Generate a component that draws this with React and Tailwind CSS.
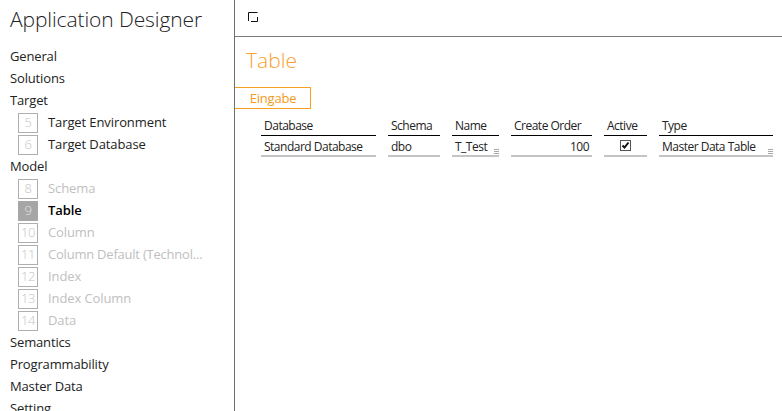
const F = { fontFamily: '"Open Sans","Noto Sans",sans-serif' };

function Top({ children }) {
  return <div className="h-[22px] leading-[20px] pl-[10px] text-[13px] text-[#222] tracking-[-0.15px]">{children}</div>;
}

function Step({ n, label, state, tight }) {
  const box =
    state === "active"
      ? "bg-[#a6a6a6] border-[#a6a6a6] text-[#e4e4e4]"
      : "border-[#aeaeae] text-[#c4c4c4]";
  const text =
    state === "active"
      ? "text-black font-semibold"
      : state === "on"
      ? "text-[#222]"
      : "text-[#c0c0c0]";
  return (
    <div className="h-[22px] flex items-center pl-[18px]">
      <div className={`w-5 h-5 border flex items-center justify-center text-[13px] font-light tracking-[-0.5px] ${box}`}>{n}</div>
      <div className={`ml-[10px] text-[13px] whitespace-nowrap ${tight ? "tracking-[-0.22px]" : "tracking-[-0.1px]"} ${text}`}>{label}</div>
    </div>
  );
}

function Col({ w, head, children, cls = "", grip }) {
  return (
    <div className={`${w} flex flex-col`}>
      <div className="h-[22px] border-b-[1.5px] border-black text-[12px] leading-[24px] pl-[3px] text-[#222] tracking-[-0.5px] whitespace-nowrap">{head}</div>
      <div className={`relative h-[21px] border-b-2 border-[#c4c4c4] text-[12px] leading-[21px] px-[3px] text-[#222] tracking-[-0.5px] whitespace-nowrap ${cls}`}>
        {children}
        {grip && (
          <svg className="absolute right-0 bottom-[1px]" width="5" height="5" viewBox="0 0 5 5">
            <path d="M0 .5h5M0 2.5h5M0 4.5h5" stroke="#a8a8a8" strokeWidth="1" />
          </svg>
        )}
      </div>
    </div>
  );
}

export default function App() {
  return (
    <div className="w-[782px] h-[411px] overflow-hidden bg-white flex" style={F}>
      <aside className="w-[235px] shrink-0 border-r border-[#6e6e6e] overflow-hidden">
        <div className="h-[46px] pl-[10px] pt-[4px] text-[21px] leading-[30px] font-light text-[#222] tracking-[-0.1px] whitespace-nowrap">Application Designer</div>
        <Top>General</Top>
        <Top>Solutions</Top>
        <Top>Target</Top>
        <Step n="5" label="Target Environment" state="on" />
        <Step n="6" label="Target Database" state="on" />
        <Top>Model</Top>
        <Step n="8" label="Schema" />
        <Step n="9" label="Table" state="active" />
        <Step n="10" label="Column" />
        <Step n="11" label="Column Default (Technol..." tight />
        <Step n="12" label="Index" />
        <Step n="13" label="Index Column" />
        <Step n="14" label="Data" />
        <Top>Semantics</Top>
        <Top>Programmability</Top>
        <Top>Master Data</Top>
        <Top>Setting</Top>
      </aside>
      <main className="flex-1 flex flex-col">
        <div className="h-[37px] border-b border-[#7a7a7a] pl-[13px] pt-[12px] shrink-0">
          <svg width="10" height="10" viewBox="0 0 10 10" className="block">
            <path d="M.5 9V.5H9.5M9.5 5v4.5H3" fill="none" stroke="#111" strokeWidth="1" />
          </svg>
        </div>
        <h1 className="pl-[11px] h-[50px] pt-[8px] text-[21px] leading-[30px] font-light text-[#f7a030]">Table</h1>
        <div className="w-[76px] h-[22px] border border-l-0 border-[#f6a020] text-[#f49a20] text-[13px] leading-[20px] text-center pl-[1px] tracking-[-0.2px]">Eingabe</div>
        <div className="flex gap-3 pl-[26px] mt-[5px]">
          <Col w="w-[115px]" head="Database">Standard Database</Col>
          <Col w="w-[52px]" head="Schema">dbo</Col>
          <Col w="w-[47px]" head="Name" grip>T_Test</Col>
          <Col w="w-[81px]" head="Create Order" cls="text-right">100</Col>
          <Col w="w-[43px]" head="Active">
            <div className="flex justify-center pt-[4px]">
              <div className="w-[11px] h-[11px] border border-[#555] flex items-center justify-center">
                <svg width="9" height="9" viewBox="0 0 9 9"><path d="M1.5 4.5l2 2 4-5" fill="none" stroke="#111" strokeWidth="2" /></svg>
              </div>
            </div>
          </Col>
          <Col w="w-[114px]" head="Type" grip>Master Data Table</Col>
        </div>
      </main>
    </div>
  );
}
